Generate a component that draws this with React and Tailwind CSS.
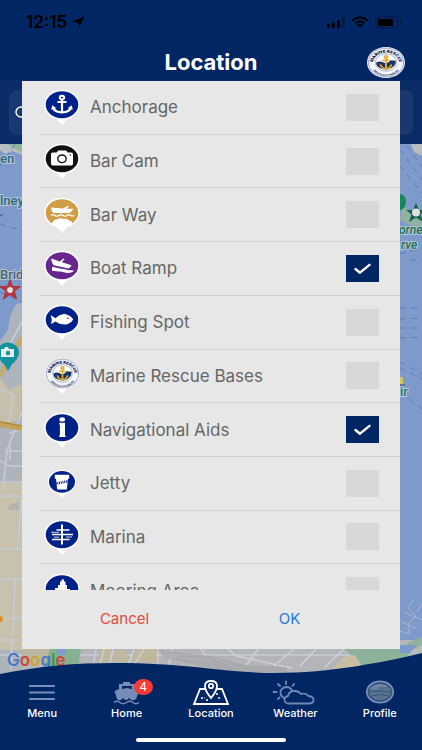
import React, { useId } from "react";

const NAVY = "#002663";

function RescueSeal({ className }) {
  const id = useId();
  return (
    <svg viewBox="0 0 100 100" preserveAspectRatio="none" className={className} aria-hidden="true">
      <defs>
        <path id={id + "t"} d="M19 66 A34 34 0 1 1 81 66" />
        <path id={id + "b"} d="M10 54 A40 40 0 0 0 90 54" />
      </defs>
      <circle cx="50" cy="50" r="50" fill="#f4f6fb" />
      <circle cx="50" cy="50" r="46" fill="none" stroke="#7f8db5" strokeWidth="3" strokeDasharray="2 1" />
      <circle cx="50" cy="50" r="28" fill="#fff" stroke="#8290b5" strokeWidth="2" />
      <path d="M24 50 Q34 43 44 50 T62 43 L76 44 A27 27 0 0 1 25 58 Z" fill="#1c3465" />
      <g fill="none" stroke="#dfae36" strokeWidth="5" strokeLinecap="round">
        <circle cx="50" cy="32" r="4" />
        <path d="M50 37V70M42 43H58M36 58Q40 70 50 70Q60 70 64 58" />
      </g>
      <text fontFamily="Inter, sans-serif" fontSize="12" fontWeight="900" fill="#14224f" textAnchor="middle">
        <textPath href={"#" + id + "t"} startOffset="50%">MARINE RESCUE</textPath>
      </text>
      <text fontFamily="Inter, sans-serif" fontSize="8" fontWeight="800" fill="#3a4878" textAnchor="middle">
        <textPath href={"#" + id + "b"} startOffset="50%">NEW SOUTH WALES</textPath>
      </text>
    </svg>
  );
}

function Pin({ fill, small, children }) {
  return (
    <svg viewBox="0 0 36 36" className="h-9 w-9 shrink-0" aria-hidden="true">
      <g transform={small ? "translate(3.6 4.2) scale(.8)" : undefined}>
        <path d="M11 28 L18 36 L25 28 Z" fill="#fff" />
        <ellipse cx="18" cy="15.8" rx="17.7" ry="15" fill="#fff" />
        <ellipse cx="18" cy="15.8" rx="16.3" ry="13.5" fill={fill} />
        {children}
      </g>
    </svg>
  );
}

const icons = {
  anchor: (
    <Pin fill="#00208a">
      <g fill="none" stroke="#fff" strokeWidth="2">
        <ellipse cx="18" cy="8.6" rx="2.2" ry="1.8" />
        <path d="M18 10V23M13.5 13H22.5" strokeWidth="2.2" />
        <path d="M8.8 18.5Q10 23 18 23.4Q26 23 27.2 18.5" strokeWidth="2.4" />
      </g>
      <path d="M7.2 20.4L8.4 16.2L12.4 19.2ZM28.8 20.4L27.6 16.2L23.6 19.2Z" fill="#fff" />
    </Pin>
  ),
  camera: (
    <Pin fill="#101211">
      <path d="M8.5 9.4H12.6L14.2 7.6H22.2L23.6 9.4H27.4Q29 9.4 29 11V20.8Q29 22.4 27.4 22.4H8.6Q7 22.4 7 20.8V11Q7 9.4 8.5 9.4Z" fill="#fff" />
      <ellipse cx="18" cy="15.8" rx="4.2" ry="3.8" fill="none" stroke="#101211" strokeWidth="1.4" />
      <circle cx="26.4" cy="12" r=".7" fill="#101211" />
    </Pin>
  ),
  barway: (
    <Pin fill="#d09c46">
      <path d="M7 10.5L19 11.6L24 8.8L25 9.4L22.5 11.8H29.5Q27 15.8 25 16H9.5Q7.4 14.5 7 10.5Z" fill="#fff" />
      <path d="M7 18.4Q9 16.9 11 18.4T15 18.4T19 18.4T23 18.4T27 18.4T30 17.9" fill="none" stroke="#fff" strokeWidth="1.2" />
      <path d="M7.5 27Q10 21.8 13 22.6Q16 20.4 19 22Q23 21 25 23.4Q28 23.8 28.6 27L18 33Z" fill="#fff" />
    </Pin>
  ),
  ramp: (
    <Pin fill="#672590">
      <path d="M7.2 8.6L15.8 11.4L19.6 8.4L20.4 9L18 12.2L27.5 15.3Q26.7 18 24.7 18.4L9.7 15.2Q7.8 13.6 7.2 8.6Z" fill="#fff" />
      <path d="M8 16.7L18.5 19Q21.5 19 24 20.2H29.3V21.4Q24 24.2 18 21.8L8 20.8Z" fill="#fff" />
    </Pin>
  ),
  fish: (
    <Pin fill="#002187">
      <path d="M6.7 11.3L11.7 14.2Q14.7 10.6 19 10.2Q20 9 22.2 10.5Q26.8 11.6 29.2 15.5Q26.2 20.2 20.8 20.6Q15 20.4 11.7 17.5L7 20Q8.6 15.5 6.7 11.3Z" fill="#fff" />
      <circle cx="23.7" cy="14.3" r=".8" fill="#002187" />
    </Pin>
  ),
  info: (
    <Pin fill="#002187">
      <ellipse cx="18.2" cy="7.4" rx="2.8" ry="2.2" fill="#fff" />
      <path d="M15.2 10.8H21V23.4H21.6V25H15.2V23.4H15.9V12.5H15.2Z" fill="#fff" />
    </Pin>
  ),
  jetty: (
    <Pin fill="#002187" small>
      <path d="M9 7H27V12H25.5L24 25.5H12L10.5 12H9Z" fill="#fff" />
      <path d="M10 18L26 15" stroke="#002187" strokeWidth="3" strokeDasharray="1.2 1" />
    </Pin>
  ),
  marina: (
    <Pin fill="#002187">
      <g stroke="#fff" fill="none">
        <path d="M18 5.4V25.4" strokeWidth="2" />
        <path d="M12.5 11H25.5M8 15.5H29M8 20.5H18M19 20.5H25.5" strokeWidth="1.6" />
        <path d="M7 13.3H15M22 18H28M10 18.2H15" strokeWidth=".8" />
      </g>
    </Pin>
  ),
  mooring: (
    <Pin fill="#002187">
      <path d="M17.5 6.5H20V8.5H21.5V12H23V16H26V19L24 23H10L11 18V15H14V12H16V8.5H17.5Z" fill="#fff" />
    </Pin>
  ),
  seal: (
    <span className="relative flex h-9 w-9 shrink-0 justify-center">
      <svg viewBox="0 0 36 36" className="absolute inset-0 h-9 w-9" aria-hidden="true">
        <path d="M11 28 L18 36 L25 28 Z" fill="#fff" />
      </svg>
      <RescueSeal className="relative h-[31px] w-[35px]" />
    </span>
  ),
};

const places = [
  ["Anchorage", "anchor", false],
  ["Bar Cam", "camera", false],
  ["Bar Way", "barway", false],
  ["Boat Ramp", "ramp", true],
  ["Fishing Spot", "fish", false],
  ["Marine Rescue Bases", "seal", false],
  ["Navigational Aids", "info", true],
  ["Jetty", "jetty", false],
  ["Marina", "marina", false],
  ["Mooring Area", "mooring", false],
];

function PlaceRow({ name, icon, checked }) {
  return (
    <li className="border-b border-[#d0d1d3]">
      <label className="flex h-full items-center pr-[21px] pl-1">
        {icons[icon]}
        <span className="ml-[10px] flex-1 text-[17px] leading-6 text-[#666]">{name}</span>
        <span className="relative flex">
          <input
            type="checkbox"
            defaultChecked={checked}
            className="peer h-[27px] w-[33px] appearance-none bg-[#d8d8d8] checked:bg-[#002663]"
          />
          <svg viewBox="0 0 33 27" className="pointer-events-none absolute inset-0 hidden h-full w-full peer-checked:block" aria-hidden="true">
            <path d="M9.5 14L14 17.7L23.5 9.8" fill="none" stroke="#fff" strokeWidth="2.4" strokeLinecap="round" strokeLinejoin="round" />
          </svg>
        </span>
      </label>
    </li>
  );
}

function StatusBar() {
  return (
    <div className="flex h-11 items-center justify-between px-[26px] text-black">
      <div className="flex items-center gap-1">
        <span className="text-[17px] leading-5 font-semibold">12:15</span>
        <svg viewBox="0 0 14 12" className="h-3 w-[14px]" aria-hidden="true">
          <path d="M13.5 .3L8.3 11.3L7.3 6.6L.4 6.1Z" />
        </svg>
      </div>
      <svg viewBox="0 0 76 14" className="-mr-[6px] h-[14px] w-[76px]" aria-hidden="true">
        <rect x="1" y="9" width="3" height="4" rx="1" />
        <rect x="6" y="7.5" width="3" height="5.5" rx="1" />
        <rect x="11" y="5" width="3" height="8" rx="1" />
        <rect x="16" y="2" width="3" height="11" rx="1" opacity=".3" />
        <g fill="none" stroke="#000" strokeWidth="2">
          <path d="M26.5 5.5Q34 -1 41.5 5.5M29.5 8.2Q34 4.3 38.5 8.2" />
        </g>
        <path d="M31.2 9.8Q34 7.8 36.8 9.8L34 12.6Z" />
        <rect x="50" y="2" width="22" height="11" rx="3" fill="none" stroke="#000" opacity=".4" />
        <rect x="52" y="4" width="15" height="7" rx="1" />
        <path d="M74 5.5Q76 7.5 74 9.5Z" opacity=".5" />
      </svg>
    </div>
  );
}

function HarbourMap() {
  return (
    <svg viewBox="0 144 422 536" preserveAspectRatio="xMidYMid slice" className="absolute inset-0 h-full w-full" role="img" aria-label="Harbour map">
      <rect y="144" width="422" height="536" fill="#7e9acb" />
      <path d="M0 144H22V155L12 151L5 154L0 150Z" fill="#b9bfc0" />
      <path d="M7 144H22V152L14 148Z" fill="#8fb59b" />
      <path d="M0 341L8 330L10 316L16 304L22 303V680H0Z" fill="#adb3bd" />
      <path d="M22 640H422V680H22Z" fill="#b3b5b9" />
      <path d="M0 398L9 390L21 384V417L12 423H0Z" fill="#c5bea9" />
      <path d="M0 483H22V650H0Z" fill="#c7c1ae" />
      <path d="M0 377L8 389L17 391L20 398L14 412L8 416H0Z" fill="#c5bfab" />
      <g fill="none" stroke="#c6cbd5" strokeWidth="1.6">
        <path d="M22 322L0 362M0 390L13 394L9 422M22 412L7 450L3 490M0 461L10 466H22M9 433L22 430M5 451H22M0 482H22M0 496H22M0 549H22M22 500L17 550M0 579H22M15 580L13 636M0 618H22M0 640H22M10 460V440M12 640L11 670M0 655H422M58 649L52 680M96 649L91 680" />
      </g>
      <path d="M22 337Q10 357 0 376" fill="none" stroke="#c1ac70" strokeWidth="5" />
      <path d="M0 424L22 428" stroke="#c5a35a" strokeWidth="6" />
      <path d="M0 422L22 426" stroke="#a88133" strokeWidth="1" />
      <circle cx="0" cy="619" r="3" fill="#d6912e" />
      <path d="M9 505L19 502V510H8ZM12 476H19V480H12Z" fill="#b3b2ae" />
      <path d="M22 649H50V664H22Z" fill="#bab69f" />
      <path d="M50 649H81L76 680H39Z" fill="#86b190" />
      <path d="M57 649H66V655H57Z" fill="#809dce" />
      <path d="M100 649H111V662H98ZM137 649H157V662H128ZM115 650H127V662H112Z" fill="#bfb89f" />
      <path d="M104 649L99 670M113 649L109 668M134 649L127 668M144 649L132 668M158 649V675M172 649L166 678M165 656L211 661M201 649L217 672M228 649L236 656L292 668M245 667L258 649M274 666L294 649M300 666L316 649M211 657L250 673M324 668L344 649" fill="none" stroke="#d1d3d8" strokeWidth="1.3" />
      <path d="M158 650L211 656L245 665L287 667V680H210V668L165 658Z" fill="#a4a5aa" opacity=".7" />
      <path d="M345 649H422V680H370L360 664Z" fill="#8cb29a" />
      <path d="M344 657L355 655L363 668L352 675H326Z" fill="#c7bea4" />
      <path d="M400 649L410 642L422 637V649Q407 655 400 649Z" fill="#8fb29d" />
      <path d="M400 645H417L410 653H400Z" fill="#7d98cf" />
      <path d="M401 664L412 650L422 645V680H401Z" fill="#b7bcbb" />
      <path d="M400 631L410 634L408 624L416 616L408 608L414 599M422 620L404 612M402 622L416 628M422 604L417 611" fill="none" stroke="#a7b5ce" />
      <path d="M411 144H422V156L414 152Z" fill="#b7bcc0" />
      <path d="M402 205L422 220V231L400 220Z" fill="#90b1a3" />
      <g fill="none" stroke="#5876b4" strokeWidth=".8" strokeDasharray="6 5">
        <path d="M400 150L422 180M407 146L422 167M400 166L422 193M410 260H422M400 254L422 248M400 308H422M400 319L422 318M400 328H422M400 338L422 337M400 362L422 374M400 368L422 379M400 392L422 409M0 224L22 231M0 292L22 302M15 144L0 166" />
      </g>
      <g fontFamily="Roboto, sans-serif" fontSize="13" fontWeight="500" stroke="#b4c6d8" strokeWidth="2" paintOrder="stroke" fill="#286978">
        <text x="0" y="163">en</text>
        <text x="0" y="205">lney</text>
        <text x="0" y="279" fill="#52606d">Brid</text>
        <text x="400" y="396" fill="#28786f">ir</text>
        <g fontStyle="italic" fontSize="12" fill="#16714e">
          <text x="399" y="234">orne</text>
          <text x="401" y="249">rve</text>
        </g>
      </g>
      <path d="M0 216L3 214" stroke="#344b71" />
      <g stroke="#aa333e" strokeWidth="1">
        <path d="M10 279.5L12.6 286.5H20.5L14.2 291L16.5 299L10 294.5L3.5 299L5.8 291L-.5 286.5H7.4Z" fill="#b73741" />
        <circle cx="10" cy="290" r="3.5" fill="#e4e5e5" />
      </g>
      <path d="M-3 353A11 10.5 0 0 1 19 353Q18 360 12 364L8 371L4 364Q-2 360 -3 353Z" fill="#13929d" />
      <path d="M1 349H4L5 347H8L9 349H14V357H1Z" fill="#e3eceb" />
      <circle cx="8" cy="353" r="2.2" fill="#13929d" />
      <ellipse cx="400" cy="202" rx="6" ry="8" fill="#16875f" />
      <path d="M416 203L419 210H426L420.5 214.5L423 222L416 217.5L409 222L411.5 214.5L406 210H413Z" fill="#176548" />
      <circle cx="416" cy="212.5" r="4" fill="#dbe3e3" />
      <path d="M400 377H403V384H400Z" fill="#d1c656" />
      <path d="M400 385H405" stroke="#495159" />
      <text x="7" y="666" fontFamily="Inter, sans-serif" fontSize="17" fontWeight="600">
        <tspan fill="#4977c8">G</tspan><tspan fill="#c9493e">o</tspan><tspan fill="#cda431">o</tspan><tspan fill="#4977c8">g</tspan><tspan fill="#3b985b">l</tspan><tspan fill="#c9493e">e</tspan>
      </text>
    </svg>
  );
}

const tabs = [
  {
    name: "Menu",
    icon: <path d="M8 6H32M8 12.5H32M8 19H32" stroke="#7b8fba" strokeWidth="2.2" strokeLinecap="round" />,
  },
  {
    name: "Home",
    badge: 4,
    icon: (
      <g fill="#758cb7">
        <path d="M16 2H23V4H28V9L32 11L29 19Q25 22 22 18Q19 22 16 18Q13 22 10 19L7.5 11L12 9V4H16ZM15 6V9L20 8L25 9V6Z" />
        <path d="M7 22.5Q10 20 13 22.5T19.5 22.5T26 22.5T32 22.5" fill="none" stroke="#758cb7" strokeWidth="1.5" />
      </g>
    ),
  },
  {
    name: "Location",
    icon: (
      <g fill="none" stroke="#fff" strokeWidth="1.8">
        <path d="M14 9H9L3 24H37L31 9H26" />
        <path d="M20 18Q14 11 14 6Q14 1 20 1Q26 1 26 6Q26 11 20 18Z" />
        <circle cx="20" cy="6" r="2.2" />
        <path d="M10 18H14M25 14H28M28 17V20M15 20H18" strokeWidth="1.4" strokeDasharray="2 1.5" />
      </g>
    ),
  },
  {
    name: "Weather",
    icon: (
      <g fill="none" stroke="#6f87b5" strokeWidth="1.8" strokeLinecap="round">
        <path d="M9 18Q5 16 5.5 11.5Q7 7 12 7Q16 7.5 17 11" />
        <path d="M11 1.5V4M3 4L5 6M19 4L17.5 6M-1.5 12H1.5M3 19L4.5 17.5" />
        <path d="M13 23.5Q9 22.5 9.5 19Q10 16.5 13 16Q14 11 19.5 11Q24 11 26 14Q31 12.5 33.5 16Q39 16.5 38.5 20.5Q38 23.5 34 23.5Z" />
      </g>
    ),
  },
  {
    name: "Profile",
    icon: (
      <g>
        <ellipse cx="20" cy="12" rx="13.3" ry="10.8" fill="#5b7190" stroke="#7990bb" strokeWidth="1.5" />
        <ellipse cx="20" cy="12" rx="11.4" ry="9" fill="#57738f" stroke="#203d70" />
        <path d="M9.5 9H30Q28 5 20 4Q12 5 9.5 9Z" fill="#6c88a5" />
        <path d="M10 12Q18 10 30 12M11 16Q21 13 29 16M18 8H29" fill="none" stroke="#3a5672" />
      </g>
    ),
  },
];

function TabBar() {
  return (
    <nav className="bg-[#002663] pb-2">
      <ul className="flex">
        {tabs.map((tab) => (
          <li key={tab.name} className="flex-1">
            <button type="button" className="flex w-full flex-col items-center text-white">
              <span className="relative flex">
                <svg viewBox="0 0 40 26" className="h-[26px] w-10 overflow-visible" fill="none" aria-hidden="true">
                  {tab.icon}
                </svg>
                {tab.badge && (
                  <span className="absolute -top-[1px] left-[27px] flex h-4 w-[19px] items-center justify-center rounded-[50%] bg-[#f93b36] text-xs">
                    {tab.badge}
                  </span>
                )}
              </span>
              <span className="text-[11px] leading-[14px] font-medium">{tab.name}</span>
            </button>
          </li>
        ))}
      </ul>
      <div className="mx-auto mt-[18px] h-1 w-[150px] rounded-full bg-white" />
    </nav>
  );
}

export default function App() {
  return (
    <div className="relative flex h-screen flex-col overflow-hidden bg-[#002663] font-[Inter,'Liberation_Sans',sans-serif]">
      <header>
        <StatusBar />
        <div className="grid h-9 grid-cols-[1fr_auto_1fr] items-center px-[17px]">
          <h1 className="col-start-2 text-[22px] leading-7 font-bold text-white">Location</h1>
          <RescueSeal className="h-[31px] w-[38px] justify-self-end" />
        </div>
      </header>
      <div className="bg-[#0a2d69] px-[9px] pt-[10px] pb-[9px]">
        <div className="flex h-[45px] items-center rounded-lg bg-[#18386f] pl-[6px]">
          <svg viewBox="0 0 14 14" className="h-[14px] w-[14px]" fill="none" stroke="#fff" strokeWidth="1.4" aria-hidden="true">
            <circle cx="6" cy="6" r="5" />
            <path d="M10 10L13 13" />
          </svg>
          <input type="search" aria-label="Search location" className="min-w-0 flex-1 bg-transparent outline-none" />
        </div>
      </div>
      <main className="relative min-h-0 flex-1">
        <HarbourMap />
        <svg viewBox="0 0 422 28" preserveAspectRatio="none" className="absolute -bottom-px left-0 h-7 w-full" aria-hidden="true">
          <path d="M0 21C40 13 75 10 115 10C190 10 225 20 275 20C330 20 385 9 422 0V28H0Z" fill={NAVY} />
        </svg>
      </main>
      <TabBar />

      <form role="dialog" aria-label="Choose location types" className="absolute inset-x-[22px] top-[81px] flex flex-col bg-[#e7e7e7]">
        <div className="h-[509px] overflow-hidden">
          <ul className="ml-[18px] grid h-[537px] grid-rows-10">
            {places.map(([name, icon, checked]) => (
              <PlaceRow key={name} name={name} icon={icon} checked={checked} />
            ))}
          </ul>
        </div>
        <div className="flex h-[59px] justify-center pr-7 pl-5 text-[15px]">
          <button type="button" className="flex-1 text-[#e04a3b]">Cancel</button>
          <button type="button" className="flex-1 text-[#1d7ae0]">OK</button>
        </div>
      </form>
    </div>
  );
}
